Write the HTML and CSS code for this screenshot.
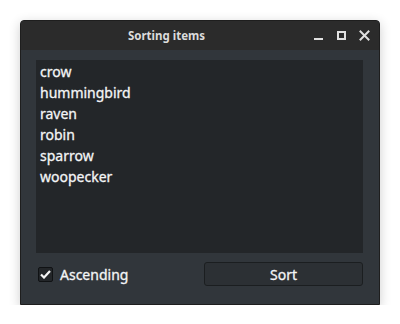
FILE: index.html
```html
<!DOCTYPE html>
<html>
<head>
<meta charset="utf-8">
<link rel="stylesheet" href="styles.css">
</head>
<body>
<div class="window">
  <div class="titlebar">
    <div class="title">Sorting items</div>
    <svg class="controls" width="60" height="30" viewBox="0 0 60 30">
      <rect x="2" y="18" width="9" height="2" fill="#e0e0e0"/>
      <rect x="26" y="12" width="7" height="7" fill="none" stroke="#e0e0e0" stroke-width="2"/>
      <path d="M48.5 11.5 L56.5 19.5 M56.5 11.5 L48.5 19.5" stroke="#e0e0e0" stroke-width="2" stroke-linecap="square"/>
    </svg>
  </div>
  <div class="content">
    <ul class="list">
      <li>crow</li>
      <li>hummingbird</li>
      <li>raven</li>
      <li>robin</li>
      <li>sparrow</li>
      <li>woopecker</li>
    </ul>
    <div class="footer">
      <label class="check">
        <span class="box">
          <svg width="11" height="9" viewBox="0 0 11 9"><path d="M1 4.5 L4 7.5 L10 1" fill="none" stroke="#f5f5f5" stroke-width="2.2"/></svg>
        </span>
        <span>Ascending</span>
      </label>
      <button class="sort">Sort</button>
    </div>
  </div>
</div>
</body>
</html>
```

FILE: styles.css
```css
html, body {
  margin: 0;
  padding: 0;
  background: #ffffff;
}
body {
  padding: 20px 0 0 20px;
  font-family: "Noto Sans", "Open Sans", sans-serif;
}
.window {
  width: 360px;
  height: 285px;
  box-sizing: border-box;
  border: 1px solid #1e1e1e;
  border-radius: 4px 4px 0 0;
  background: #31363b;
  box-shadow: 0 3px 12px rgba(0, 0, 0, 0.2);
  display: flex;
  flex-direction: column;
  overflow: hidden;
}
.titlebar {
  height: 29px;
  background: #2b2b2b;
  display: flex;
  align-items: center;
  flex-shrink: 0;
}
.title {
  width: 291px;
  text-align: center;
  color: #dcdcdc;
  font-size: 11.5px;
  font-weight: bold;
  line-height: 29px;
}
.controls {
  display: block;
  margin-top: -1px;
}
.content {
  flex: 1;
  display: flex;
  flex-direction: column;
  padding: 10px 16px 18px 15px;
}
.list {
  list-style: none;
  margin: 0;
  padding: 1px 4px;
  height: 193px;
  box-sizing: border-box;
  background: #232629;
  color: #f4f5f6;
  font-size: 14px;
  line-height: 21px;
  -webkit-text-stroke: 0.3px currentColor;
}
.footer {
  margin-top: 9px;
  display: flex;
  align-items: center;
  justify-content: space-between;
  height: 24px;
}
.check {
  display: flex;
  align-items: center;
  gap: 7px;
  color: #f4f5f6;
  font-size: 14px;
  padding-left: 2px;
  -webkit-text-stroke: 0.3px currentColor;
}
.box {
  width: 15px;
  height: 15px;
  box-sizing: border-box;
  border: 1px solid #101214;
  border-radius: 2px;
  background: #232629;
  display: flex;
  align-items: center;
  justify-content: center;
}
.box svg {
  display: block;
}
.sort {
  width: 159px;
  height: 24px;
  box-sizing: border-box;
  border: 1px solid #1b1e20;
  border-radius: 3px;
  background: #2c3034;
  color: #f4f5f6;
  font-family: "Noto Sans", "Open Sans", sans-serif;
  font-size: 14px;
  padding: 0;
  -webkit-text-stroke: 0.3px currentColor;
}
```
